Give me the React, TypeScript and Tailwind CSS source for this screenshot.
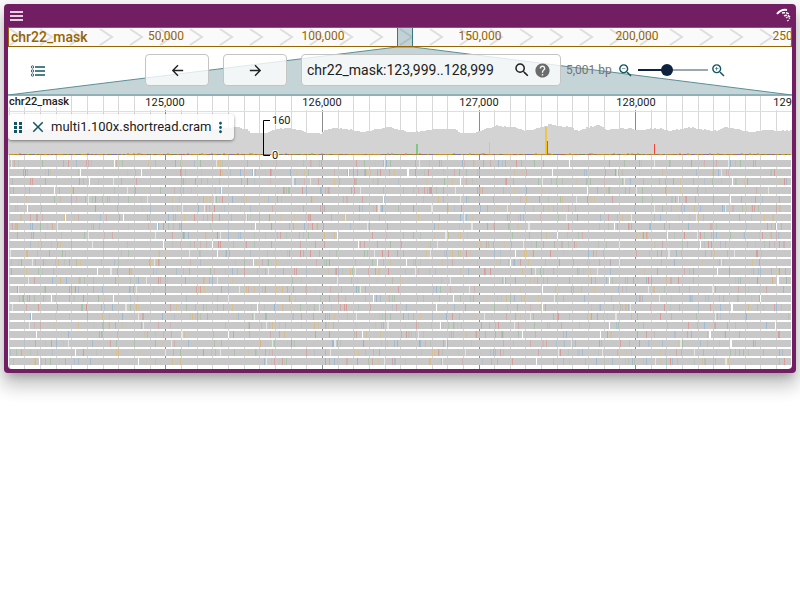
import { MdArrowBack, MdArrowForward, MdSearch, MdHelp, MdZoomIn, MdZoomOut, MdClose, MdMoreVert } from 'react-icons/md';

const MINOR = 15.66;
const gridLines = Array.from({ length: 50 }, (_, i) => ({ x: 0.7 + i * MINOR, major: i % 10 === 0 && i > 0 }));

// Small deterministic generator so the reads look the same on every load.
function makeRandom(seed: number) {
  let s = seed;
  return () => {
    s = (s * 1664525 + 1013904223) % 4294967296;
    return s / 4294967296;
  };
}

const BASES = ['#dc8f8a', '#8fb2d2', '#98bf9a', '#dcb97c', '#dc8f8a', '#8fb8dc', '#a2bfa0', '#dfbf80'];

const COVERAGE =
  '0,131 30,129 60,131 95,129 130,131 170,130 200,130 226,127 239,129 242,133 257,133 267,129 280,128 290,130 299,133 312,134 315,131 324,128 337,129 354,132 364,130 379,127 390,130 400,132 417,131 424,129 444,129 454,133 467,133 470,131 484,127 488,125 497,127 507,127 509,129 517,131 522,130 537,126 540,124 549,126 560,127 570,131 577,128 590,125 599,130 619,128 627,130 652,128 660,131 672,129 684,127 689,129 707,131 715,127 725,128 740,132 759,130 769,131 784,130';

// Depth of every two-pixel bin, read off the coverage curve with a little noise.
function coverageBins() {
  const points = COVERAGE.split(' ').map((p) => p.split(',').map(Number));
  const rnd = makeRandom(91);
  return Array.from({ length: 392 }, (_, i) => {
    const x = i * 2;
    const k = Math.max(1, points.findIndex((p) => p[0] > x));
    const [x0, y0] = points[k - 1];
    const [x1, y1] = points[k];
    const y = y0 + ((y1 - y0) * (x - x0)) / (x1 - x0) - 115;
    return { x, y: Math.round(y + rnd() - 0.5) };
  });
}

function Grid({ height }: { height: number }) {
  return (
    <g shapeRendering="crispEdges">
      {gridLines.map((g) => (
        <rect key={g.x} x={Math.round(g.x)} y={0} width={1} height={height} fill={g.major ? '#8c8c8c' : '#d8d8d8'} />
      ))}
    </g>
  );
}

function Overview() {
  return (
    <div className="relative h-5 overflow-hidden border border-[#966400] bg-[#fafafa] text-[#966400]">
      <svg className="absolute inset-0 h-full w-full" fill="none" stroke="#dedede" strokeWidth="2">
        {Array.from({ length: 27 }, (_, i) => (
          <path key={i} d={`M${i * 30 + 1} 1l12 8l-12 8`} />
        ))}
      </svg>
      <span className="absolute left-[2px] top-0 text-sm font-medium leading-[18px]">chr22_mask</span>
      {['50,000', '100,000', '150,000', '200,000', '250,000'].map((t, i) => (
        <span key={t} className="absolute -translate-x-1/2 text-xs leading-[16px]" style={{ left: 157 + i * 157 }}>
          {t}
        </span>
      ))}
      <div className="absolute -top-px left-[388px] h-5 w-4 border border-[#3c7680] bg-[#3c7680]/30" />
    </div>
  );
}

function Navigation() {
  return (
    <div className="relative flex h-12 items-center pb-[2px]">
      <svg className="absolute inset-0 h-full w-full" viewBox="0 0 784 48" preserveAspectRatio="none">
        <path d="M389 0H405L784 48H0Z" fill="#c5d4d7" stroke="#5b8f96" strokeWidth="1" />
      </svg>
      <button aria-label="Open track selector" className="relative ml-[21px] flex h-8 w-[18px] items-center text-[#135560]">
        <svg width="18" height="18" viewBox="0 0 18 18" fill="none" stroke="currentColor">
          <path d="M6 6h10M6 10h10M6 14h10" strokeWidth="1.6" />
          <circle cx="3.500" cy="6" r="1.200" strokeWidth="0.9" />
          <circle cx="3.500" cy="10" r="1.200" strokeWidth="0.9" />
          <circle cx="3.500" cy="14" r="1.200" strokeWidth="0.9" />
        </svg>
      </button>
      <button aria-label="Pan left" className="relative ml-[98px] flex h-8 w-16 items-center justify-center rounded-sm border border-[#c4c4c4] bg-white/80">
        <MdArrowBack size={17} />
      </button>
      <button aria-label="Pan right" className="relative ml-[14px] flex h-8 w-16 items-center justify-center rounded-sm border border-[#c4c4c4] bg-white/80">
        <MdArrowForward size={17} />
      </button>
      <div className="relative ml-[14px] flex h-8 w-[260px] items-center rounded-sm border border-[#c4c4c4] bg-white/80">
        <input aria-label="Location" defaultValue="chr22_mask:123,999..128,999" className="ml-[5px] w-[205px] bg-transparent text-sm outline-none" />
        <button aria-label="Search" className="ml-px">
          <MdSearch size={18} />
        </button>
        <button aria-label="Help" className="ml-[3px] text-[#6b6b6b]">
          <MdHelp size={17} />
        </button>
      </div>
      <span className="relative ml-[5px] w-[48px] whitespace-nowrap text-xs text-[#757575]">5,001 bp</span>
      <button aria-label="Zoom out" className="relative ml-[3px] text-[#135560]">
        <MdZoomOut size={17} />
      </button>
      <input
        type="range"
        aria-label="Zoom"
        defaultValue={40}
        className="relative ml-1 h-3 w-[70px] appearance-none bg-[linear-gradient(#0d233f,#0d233f),linear-gradient(#9da7b0,#9da7b0)] bg-[length:28px_2px,100%_2px] bg-[position:left_center,left_center] bg-no-repeat [&::-webkit-slider-thumb]:h-3 [&::-webkit-slider-thumb]:w-3 [&::-webkit-slider-thumb]:appearance-none [&::-webkit-slider-thumb]:rounded-full [&::-webkit-slider-thumb]:bg-[#0d233f]"
      />
      <button aria-label="Zoom in" className="relative ml-[2px] text-[#135560]">
        <MdZoomIn size={17} />
      </button>
    </div>
  );
}

function ScaleBar() {
  return (
    <div className="relative h-[19px] overflow-hidden border-t border-[#8fb0b5] text-[#212121]">
      <svg className="absolute inset-0 h-full w-full">
        <Grid height={20} />
        <path d="M0 15.500H784M0 18.500H784" stroke="#dedede" />
      </svg>
      <span className="absolute left-px top-0 bg-white pr-px text-[11px] font-medium leading-[11px]">chr22_mask</span>
      {['125,000', '126,000', '127,000', '128,000', '129,000'].map((t, i) => (
        <span key={t} className="absolute top-0 -translate-x-1/2 bg-white text-[11px] leading-[14px]" style={{ left: 157 + i * 157 }}>
          {t}
        </span>
      ))}
    </div>
  );
}

function Reads() {
  const rnd = makeRandom(22);
  return (
    <g shapeRendering="crispEdges">
      {Array.from({ length: 23 }, (_, r) => {
        const y = 46 + r * 9;
        return (
          <g key={r}>
            <rect x={1} y={y} width={782} height={7} fill="#c8c8c8" />
            {Array.from({ length: 75 }, (_, i) => (
              <rect key={i} x={Math.floor(2 + rnd() * 780)} y={y} width={1} height={7} fill={BASES[Math.floor(rnd() * 8)]} opacity={0.25 + rnd() * 0.6} />
            ))}
            {Array.from({ length: 8 }, (_, i) => (
              <rect key={i} x={Math.floor(i * 98 + rnd() * 90)} y={y} width={rnd() > 0.85 ? 2 : 1} height={7} fill={rnd() > 0.6 ? '#ffffff' : '#e4e4e4'} />
            ))}
          </g>
        );
      })}
    </g>
  );
}

function Track() {
  const rnd = makeRandom(7);
  return (
    <div className="relative">
      <svg className="block h-[255px] w-full overflow-hidden">
        <Grid height={255} />
        <g shapeRendering="crispEdges">
          {coverageBins().map((b) => (
            <rect key={b.x} x={b.x} y={b.y + 1} width={2} height={40 - b.y} fill="#d3d3d3" />
          ))}
          {Array.from({ length: 391 }, (_, i) => {
            const tall = rnd() > 0.9;
            return (
              <g key={i}>
                <rect x={1 + i * 2} y={40} width={2} height={1} fill={['#b98a2d', '#c98a3a', '#7c8a46', '#b96a50', '#7a73a4', '#c1962e'][Math.floor(rnd() * 6)]} />
                {tall && <rect x={1 + i * 2} y={39} width={2} height={1} fill="#dda590" />}
              </g>
            );
          })}
          <rect x={408} y={30} width={2} height={10} fill="#81c784" />
          <rect x={481} y={28} width={1} height={12} fill="#c9c3c0" />
          <rect x={537} y={13} width={2} height={27} fill="#eec44a" />
          <rect x={538} y={27} width={1} height={13} fill="#ffc107" />
          <rect x={539} y={27} width={1} height={13} fill="#4a83b8" />
          <rect x={646} y={30} width={1} height={10} fill="#f44336" />
        </g>
        <Reads />
        <path d="M262 6.500H255.500V41.500H262" fill="none" stroke="#000" />
        <g className="text-[11px]" fill="#212121" stroke="#fff" strokeWidth="2" paintOrder="stroke">
          <text x="264" y="10">160</text>
          <text x="264" y="45">0</text>
        </g>
      </svg>
      <div className="absolute left-0 top-0 flex h-[26px] w-[226px] items-center rounded-sm bg-white/80 shadow-[0_1px_3px_rgba(0,0,0,0.45)]">
        <button aria-label="Drag track" className="ml-px text-[#135560]">
          <svg width="16" height="16" viewBox="0 0 16 16" fill="currentColor">
            <path d="M5 3h3v3H5zM5 7h3v3H5zM5 11h3v3H5zM10 3h3v3h-3zM10 7h3v3h-3zM10 11h3v3h-3z" />
          </svg>
        </button>
        <button aria-label="Close track" className="ml-1 text-[#135560]">
          <MdClose size={18} />
        </button>
        <span className="ml-1 w-[158px] whitespace-nowrap text-[13px] leading-5">multi1.100x.shortread.cram</span>
        <button aria-label="Track menu" className="ml-[3px] text-[#135560]">
          <MdMoreVert size={17} />
        </button>
      </div>
    </div>
  );
}

export default function App() {
  return (
    <main className="min-h-screen bg-white p-1 font-[Roboto,sans-serif] text-[#212121]">
      <section className="overflow-hidden rounded-[4px] bg-[#721e63] px-1 pb-1 shadow-[0_7px_8px_-4px_rgba(0,0,0,0.2),0_12px_17px_2px_rgba(0,0,0,0.14),0_5px_22px_4px_rgba(0,0,0,0.12)]">
        <header className="flex h-[23px] items-center justify-between text-white">
          <button aria-label="Menu" className="ml-[2px] text-[#e5cfe1]">
            <svg width="13" height="10" viewBox="0 0 13 10" fill="currentColor" shapeRendering="crispEdges">
              <path d="M0 0h13v2H0zM0 4h13v2H0zM0 8h13v2H0z" />
            </svg>
          </button>
          <svg width="17" height="17" viewBox="0 0 17 17" fill="none" stroke="#fff">
            <path d="M2 7Q6 2 12 3" strokeWidth="2" />
            <path d="M7 6Q11 5 14 7M9 9Q12 7 15 10" strokeWidth="1.500" strokeDasharray="3 1" />
            <path d="M11 11Q13 9 15 12M12 14L14 13" strokeWidth="1.200" strokeDasharray="2 1" opacity="0.8" />
          </svg>
        </header>
        <div className="overflow-hidden rounded-b-sm bg-white">
          <Overview />
          <Navigation />
          <ScaleBar />
          <Track />
        </div>
      </section>
    </main>
  );
}
